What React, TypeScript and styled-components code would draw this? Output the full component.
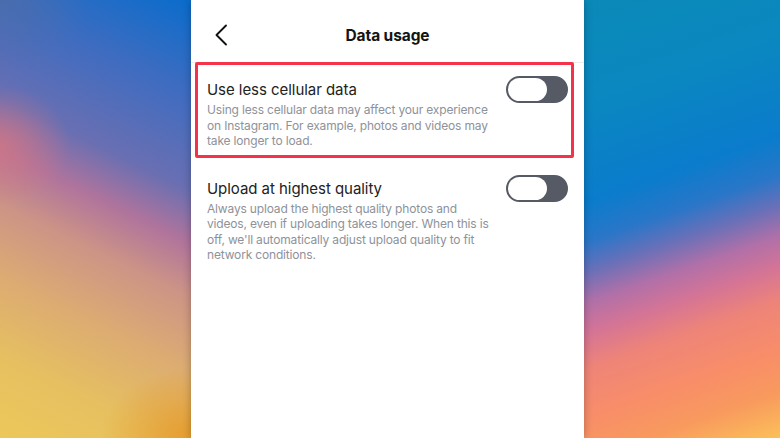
import { FC } from "react";
import styled, { createGlobalStyle, css } from "styled-components";

const GlobalStyle = createGlobalStyle`
  html, body {
    margin: 0;
    padding: 0;
    width: 780px;
    height: 438px;
    overflow: hidden;
  }
  body {
    font-family: Inter, "Liberation Sans", sans-serif;
    -webkit-font-smoothing: antialiased;
  }
`;

const Stage = styled.div`
  display: flex;
  width: 780px;
  height: 438px;
`;

const Wall = styled.div<{ side: "left" | "right" }>`
  height: 100%;
  ${({ side }) =>
    side === "left"
      ? css`
          width: 191px;
          background:
            radial-gradient(ellipse 70px 60px at 0px 145px, rgba(214, 118, 128, 0.7), rgba(214, 118, 128, 0) 100%),
            radial-gradient(ellipse 90px 70px at 191px 438px, rgba(230, 150, 36, 0.85), rgba(230, 150, 36, 0) 100%),
            radial-gradient(ellipse 90px 70px at 0px 0px, rgba(80, 108, 166, 0.7), rgba(80, 108, 166, 0) 100%),
            linear-gradient(
              206deg,
              #0a6ccc 0%,
              #3f6cc0 18%,
              #6a6fb2 36%,
              #b0749c 46%,
              #cc9486 56%,
              #dcac72 70%,
              #e6c060 85%,
              #ecc85a 100%
            );
        `
      : css`
          width: 196px;
          background: linear-gradient(
            161deg,
            #0a8ab8 0%,
            #0a88c0 20%,
            #0a7ccc 40%,
            #2a76c8 48%,
            #6a70b8 54%,
            #b070a8 60%,
            #d47496 66%,
            #ee8478 73%,
            #f88e68 83%,
            #f89a5e 91%,
            #fcc058 100%
          );
        `}
`;

const Phone = styled.div`
  width: 393px;
  height: 100%;
  background: #ffffff;
  box-shadow: 0 0 8px rgba(0, 0, 0, 0.28);
  display: flex;
  flex-direction: column;
  position: relative;
  z-index: 1;
`;

const Header = styled.div`
  height: 62px;
  border-bottom: 1px solid #ececec;
  display: flex;
  align-items: center;
  justify-content: center;
  position: relative;
  flex-shrink: 0;
`;

const BackButton = styled.button`
  position: absolute;
  left: 18px;
  top: 21px;
  width: 24px;
  height: 28px;
  padding: 0;
  border: none;
  background: none;
  display: flex;
  align-items: center;
  justify-content: center;
`;

const Title = styled.h1`
  margin: 0;
  margin-top: 8px;
  font-size: 15.5px;
  font-weight: 700;
  color: #141414;
  letter-spacing: -0.1px;
`;

const Row = styled.div<{ highlight?: boolean }>`
  position: relative;
  display: flex;
  align-items: flex-start;
  justify-content: space-between;
  padding: 17px 16px 13px 16px;

  ${({ highlight }) =>
    highlight &&
    css`
      &::after {
        content: "";
        position: absolute;
        left: 4px;
        right: 10px;
        top: -1px;
        bottom: 4px;
        border: 3px solid #f2334a;
        border-radius: 2px;
        pointer-events: none;
      }
    `}
`;

const TextBox = styled.div`
  width: 290px;
`;

const RowTitle = styled.div`
  font-size: 15px;
  line-height: 20px;
  color: #222222;
  letter-spacing: -0.05px;
`;

const RowDesc = styled.p`
  margin: 2px 0 0;
  font-size: 12px;
  line-height: 15.5px;
  letter-spacing: -0.17px;
  color: #8e929a;
`;

const Track = styled.div<{ on?: boolean }>`
  margin-top: -4px;
  width: 62px;
  height: 27px;
  box-sizing: border-box;
  border-radius: 14px;
  background: #555a65;
  border: 2px solid #555a65;
  display: flex;
  justify-content: ${({ on }) => (on ? "flex-end" : "flex-start")};
  flex-shrink: 0;
`;

const Knob = styled.div`
  width: 39px;
  height: 23px;
  border-radius: 12px;
  background: #ffffff;
`;

const Chevron: FC = () => (
  <svg width="14" height="22" viewBox="0 0 14 22" fill="none">
    <path d="M12 1.5 L2.5 11 L12 20.5" stroke="#111" strokeWidth="1.9" strokeLinecap="round" strokeLinejoin="round" />
  </svg>
);

interface ISetting {
  title: string;
  desc: string;
  highlight?: boolean;
}

const settings: ISetting[] = [
  {
    title: "Use less cellular data",
    desc: "Using less cellular data may affect your experience on Instagram. For example, photos and videos may take longer to load.",
    highlight: true,
  },
  {
    title: "Upload at highest quality",
    desc: "Always upload the highest quality photos and videos, even if uploading takes longer. When this is off, we'll automatically adjust upload quality to fit network conditions.",
  },
];

const SettingRow: FC<ISetting> = ({ title, desc, highlight }) => (
  <Row highlight={highlight}>
    <TextBox>
      <RowTitle>{title}</RowTitle>
      <RowDesc>{desc}</RowDesc>
    </TextBox>
    <Track>
      <Knob />
    </Track>
  </Row>
);

const App: FC = () => {
  return (
    <>
      <GlobalStyle />
      <Stage>
        <Wall side="left" />
        <Phone>
          <Header>
            <BackButton>
              <Chevron />
            </BackButton>
            <Title>Data usage</Title>
          </Header>
          {settings.map((s) => (
            <SettingRow key={s.title} {...s} />
          ))}
        </Phone>
        <Wall side="right" />
      </Stage>
    </>
  );
};

export default App;
